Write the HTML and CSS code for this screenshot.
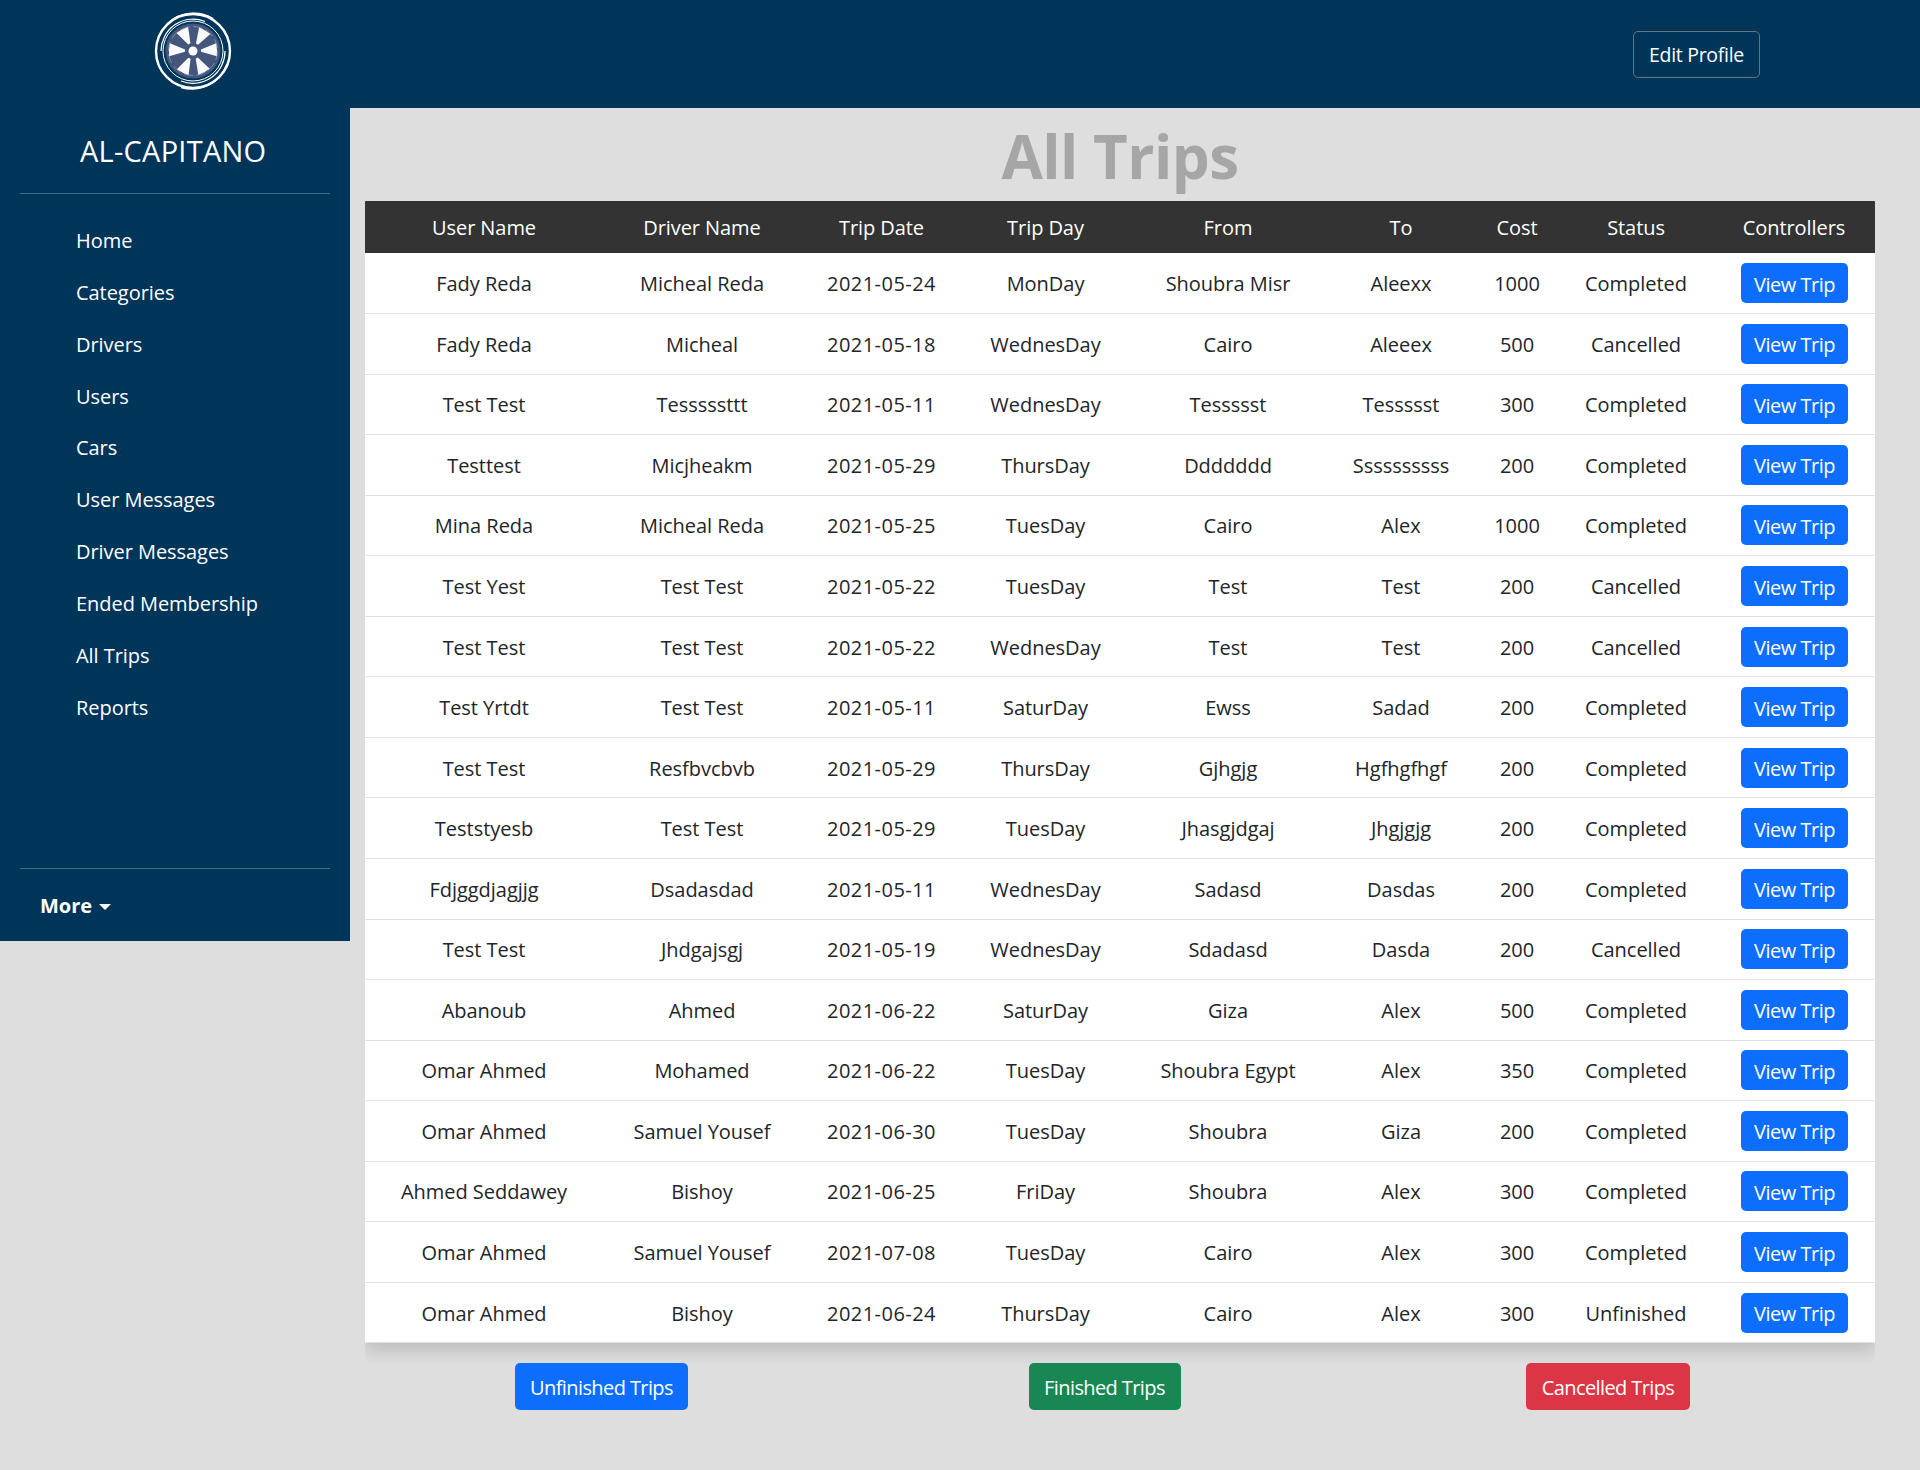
FILE: index.html
```html
<!DOCTYPE html>
<html lang="en">
<head>
<meta charset="utf-8">
<title>All Trips</title>
<link rel="stylesheet" href="styles.css">
</head>
<body>
<header class="topbar">
  <div class="logo-cell">
    <svg class="logo" viewBox="0 0 80 80" width="80" height="80" aria-hidden="true">
      <defs>
        <path id="spoke" d="M8 -1.2L23.500 -6.500Q24.500 0 23.500 6.500L8 1.200Z" fill="#f8f9fa"/>
      </defs>
      <circle cx="40" cy="40" r="37" fill="none" stroke="#fff" stroke-width="2.400"/>
      <path d="M14 13A38 38 0 0 1 60 7.500" fill="none" stroke="#fff" stroke-width="1.400"/>
      <path d="M74 53A38 38 0 0 1 28 76.500" fill="none" stroke="#fff" stroke-width="1.400"/>
      <path d="M8 40A32 32 0 0 1 52 10.500" fill="none" stroke="#fff" stroke-width="1.200"/>
      <path d="M72 40A32 32 0 0 1 28 70" fill="none" stroke="#fff" stroke-width="1.200"/>
      <circle cx="40" cy="40" r="30" fill="none" stroke="#fff" stroke-width="1"/>
      <circle cx="40" cy="40" r="27.500" fill="#44567c"/>
      <circle cx="40" cy="40" r="24.500" fill="none" stroke="#9aa3b8" stroke-width="0.700" stroke-dasharray="9 3.800"/>
      <g transform="translate(40 40)">
        <use href="#spoke" transform="rotate(-3)"/>
        <use href="#spoke" transform="rotate(62)"/>
        <use href="#spoke" transform="rotate(116)"/>
        <use href="#spoke" transform="rotate(183)"/>
        <use href="#spoke" transform="rotate(243)"/>
        <use href="#spoke" transform="rotate(300)"/>
      </g>
      <circle cx="40" cy="40" r="4.500" fill="#fff"/>
    </svg>
  </div>
  <a class="edit-btn" href="#">Edit Profile</a>
</header>
<div class="layout">
  <aside class="sidebar">
    <div class="brand">AL-CAPITANO</div>
    <hr class="rule">
    <nav class="nav">
      <a href="#">Home</a>
      <a href="#">Categories</a>
      <a href="#">Drivers</a>
      <a href="#">Users</a>
      <a href="#">Cars</a>
      <a href="#">User Messages</a>
      <a href="#">Driver Messages</a>
      <a href="#">Ended Membership</a>
      <a href="#">All Trips</a>
      <a href="#">Reports</a>
    </nav>
    <hr class="rule rule-bottom">
    <div class="more">More<span class="caret"></span></div>
  </aside>
  <main class="content">
    <h1 class="title">All Trips</h1>
    <div class="table-clip">
    <table class="trips">
      <colgroup>
        <col class="c1"><col class="c2"><col class="c3"><col class="c4"><col class="c5"><col class="c6"><col class="c7"><col class="c8"><col class="c9">
      </colgroup>
      <thead>
        <tr><th>User Name</th><th>Driver Name</th><th>Trip Date</th><th>Trip Day</th><th>From</th><th>To</th><th>Cost</th><th>Status</th><th>Controllers</th></tr>
      </thead>
      <tbody>
        <tr><td>Fady Reda</td><td>Micheal Reda</td><td class="date">2021-05-24</td><td>MonDay</td><td>Shoubra Misr</td><td>Aleexx</td><td>1000</td><td>Completed</td><td class="ctl"><a class="btn blue small" href="#">View Trip</a></td></tr>
        <tr><td>Fady Reda</td><td>Micheal</td><td class="date">2021-05-18</td><td>WednesDay</td><td>Cairo</td><td>Aleeex</td><td>500</td><td>Cancelled</td><td class="ctl"><a class="btn blue small" href="#">View Trip</a></td></tr>
        <tr><td>Test Test</td><td>Tesssssttt</td><td class="date">2021-05-11</td><td>WednesDay</td><td>Tessssst</td><td>Tessssst</td><td>300</td><td>Completed</td><td class="ctl"><a class="btn blue small" href="#">View Trip</a></td></tr>
        <tr><td>Testtest</td><td>Micjheakm</td><td class="date">2021-05-29</td><td>ThursDay</td><td>Ddddddd</td><td>Ssssssssss</td><td>200</td><td>Completed</td><td class="ctl"><a class="btn blue small" href="#">View Trip</a></td></tr>
        <tr><td>Mina Reda</td><td>Micheal Reda</td><td class="date">2021-05-25</td><td>TuesDay</td><td>Cairo</td><td>Alex</td><td>1000</td><td>Completed</td><td class="ctl"><a class="btn blue small" href="#">View Trip</a></td></tr>
        <tr><td>Test Yest</td><td>Test Test</td><td class="date">2021-05-22</td><td>TuesDay</td><td>Test</td><td>Test</td><td>200</td><td>Cancelled</td><td class="ctl"><a class="btn blue small" href="#">View Trip</a></td></tr>
        <tr><td>Test Test</td><td>Test Test</td><td class="date">2021-05-22</td><td>WednesDay</td><td>Test</td><td>Test</td><td>200</td><td>Cancelled</td><td class="ctl"><a class="btn blue small" href="#">View Trip</a></td></tr>
        <tr><td>Test Yrtdt</td><td>Test Test</td><td class="date">2021-05-11</td><td>SaturDay</td><td>Ewss</td><td>Sadad</td><td>200</td><td>Completed</td><td class="ctl"><a class="btn blue small" href="#">View Trip</a></td></tr>
        <tr><td>Test Test</td><td>Resfbvcbvb</td><td class="date">2021-05-29</td><td>ThursDay</td><td>Gjhgjg</td><td>Hgfhgfhgf</td><td>200</td><td>Completed</td><td class="ctl"><a class="btn blue small" href="#">View Trip</a></td></tr>
        <tr><td>Teststyesb</td><td>Test Test</td><td class="date">2021-05-29</td><td>TuesDay</td><td>Jhasgjdgaj</td><td>Jhgjgjg</td><td>200</td><td>Completed</td><td class="ctl"><a class="btn blue small" href="#">View Trip</a></td></tr>
        <tr><td>Fdjggdjagjjg</td><td>Dsadasdad</td><td class="date">2021-05-11</td><td>WednesDay</td><td>Sadasd</td><td>Dasdas</td><td>200</td><td>Completed</td><td class="ctl"><a class="btn blue small" href="#">View Trip</a></td></tr>
        <tr><td>Test Test</td><td>Jhdgajsgj</td><td class="date">2021-05-19</td><td>WednesDay</td><td>Sdadasd</td><td>Dasda</td><td>200</td><td>Cancelled</td><td class="ctl"><a class="btn blue small" href="#">View Trip</a></td></tr>
        <tr><td>Abanoub</td><td>Ahmed</td><td class="date">2021-06-22</td><td>SaturDay</td><td>Giza</td><td>Alex</td><td>500</td><td>Completed</td><td class="ctl"><a class="btn blue small" href="#">View Trip</a></td></tr>
        <tr><td>Omar Ahmed</td><td>Mohamed</td><td class="date">2021-06-22</td><td>TuesDay</td><td>Shoubra Egypt</td><td>Alex</td><td>350</td><td>Completed</td><td class="ctl"><a class="btn blue small" href="#">View Trip</a></td></tr>
        <tr><td>Omar Ahmed</td><td>Samuel Yousef</td><td class="date">2021-06-30</td><td>TuesDay</td><td>Shoubra</td><td>Giza</td><td>200</td><td>Completed</td><td class="ctl"><a class="btn blue small" href="#">View Trip</a></td></tr>
        <tr><td>Ahmed Seddawey</td><td>Bishoy</td><td class="date">2021-06-25</td><td>FriDay</td><td>Shoubra</td><td>Alex</td><td>300</td><td>Completed</td><td class="ctl"><a class="btn blue small" href="#">View Trip</a></td></tr>
        <tr><td>Omar Ahmed</td><td>Samuel Yousef</td><td class="date">2021-07-08</td><td>TuesDay</td><td>Cairo</td><td>Alex</td><td>300</td><td>Completed</td><td class="ctl"><a class="btn blue small" href="#">View Trip</a></td></tr>
        <tr><td>Omar Ahmed</td><td>Bishoy</td><td class="date">2021-06-24</td><td>ThursDay</td><td>Cairo</td><td>Alex</td><td>300</td><td>Unfinished</td><td class="ctl"><a class="btn blue small" href="#">View Trip</a></td></tr>
      </tbody>
    </table>
    </div>
    <div class="actions">
      <a class="btn blue wide w-unfinished" href="#">Unfinished Trips</a>
      <a class="btn green wide w-finished" href="#">Finished Trips</a>
      <a class="btn red wide w-cancelled" href="#">Cancelled Trips</a>
    </div>
  </main>
</div>
</body>
</html>
```
FILE: styles.css
```css
* { box-sizing: border-box; }
html, body { margin: 0; padding: 0; }
body {
  width: 1920px;
  height: 1470px;
  background: #dedede;
  color: #212529;
  font-family: "Open Sans", "Noto Sans", sans-serif;
  font-size: 20px;
  overflow: hidden;
}
a { text-decoration: none; color: inherit; }

.topbar {
  height: 108px;
  background: #00355a;
  display: flex;
  align-items: flex-start;
  justify-content: space-between;
}
.logo-cell { width: 350px; padding: 11px 0 0 153px; }
.logo { display: block; }
.edit-btn {
  margin: 31px 160px 0 0;
  width: 127px;
  height: 47px;
  border: 1px solid #6c757d;
  border-radius: 5px;
  color: #fff;
  display: flex;
  align-items: center;
  justify-content: center;
  font-size: 19.500px;
  letter-spacing: -0.300px;
}

.layout { display: flex; align-items: flex-start; }

.sidebar {
  width: 350px;
  height: 833px;
  background: #00355a;
  color: #fff;
  padding: 24px 20px 0;
  display: flex;
  flex-direction: column;
}
.brand {
  font-size: 29px;
  line-height: 38px;
  padding-left: 60px;
  letter-spacing: 0.250px;
}
.rule { width: 310px; margin: 23px 0 0; border: 0; border-top: 1px solid #456a85; height: 0; }
.nav { display: flex; flex-direction: column; padding: 32px 0 0 56px; flex: 1; }
.nav a {
  height: 51.850px;
  line-height: 30px;
  font-size: 20px;
  letter-spacing: -0.050px;
}
.rule-bottom { margin: 0; }
.more {
  font-size: 20px;
  font-weight: 700;
  line-height: 30px;
  padding: 22px 0 0 20px;
  height: 72px;
  letter-spacing: 0;
}
.caret {
  display: inline-block;
  margin-left: 6.500px;
  vertical-align: 3px;
  border-top: 6px solid #fff;
  border-left: 6px solid transparent;
  border-right: 6px solid transparent;
}

.content { width: 1570px; padding: 0 45px 0 15px; }
.title {
  margin: 0;
  height: 93px;
  padding-top: 6px;
  text-align: center;
  font-size: 60px;
  line-height: 84px;
  font-weight: 700;
  color: #a6a6a6;
  letter-spacing: -0.500px;
}
.table-clip { overflow: hidden; padding-bottom: 20px; }
.trips {
  width: 1510px;
  table-layout: fixed;
  border-collapse: collapse;
  background: #fff;
  box-shadow: 0 8px 16px rgba(0, 0, 0, 0.15);
}
.c1 { width: 238px; }
.c2 { width: 198px; }
.c3 { width: 161px; }
.c4 { width: 167px; }
.c5 { width: 198px; }
.c6 { width: 148px; }
.c7 { width: 84px; }
.c8 { width: 154px; }
.c9 { width: 162px; }
.trips th {
  height: 52px;
  background: #333;
  color: #fff;
  font-weight: 400;
  font-size: 20px;
  letter-spacing: -0.070px;
  text-align: center;
  padding: 0;
}
.trips td {
  height: 60.550px;
  border-bottom: 1px solid #dee2e6;
  font-size: 20px;
  letter-spacing: -0.030px;
  text-align: center;
  padding: 1px 0 0;
}
.trips td.date { letter-spacing: 0.450px; }
.trips td.ctl { padding: 0; letter-spacing: -0.500px; }
.btn {
  display: inline-flex;
  align-items: center;
  justify-content: center;
  color: #fff;
  border-radius: 5px;
}
.small { width: 107px; height: 40px; vertical-align: middle; padding: 2px 0 0 1px; }
.blue { background: #0d6efd; }
.green { background: #198754; }
.red { background: #dc3545; }
.wide { height: 47px; padding-top: 2px; font-size: 20px; letter-spacing: -0.600px; }
.w-unfinished { width: 173px; }
.w-finished { width: 152px; }
.w-cancelled { width: 164px; }
.actions {
  display: grid;
  grid-template-columns: 503px 503px 504px;
  justify-items: center;
  margin-left: -15px;
}
```
